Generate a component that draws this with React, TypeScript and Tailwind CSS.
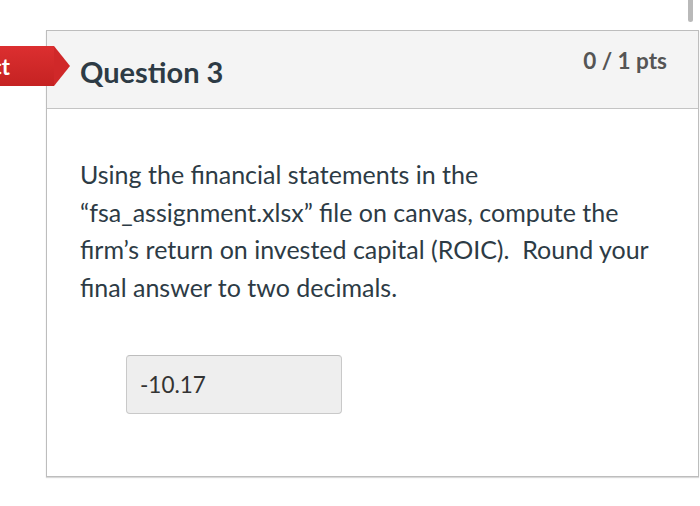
export default function App() {
  return (
    <div className="relative w-[700px] h-[506px] bg-white font-['Lato','Noto_Sans',sans-serif] overflow-hidden">
      {/* scrollbar thumb */}
      <div className="absolute left-[688px] top-0 w-[5px] h-[22px] rounded-b-full bg-[#b9b9b9]" />

      <div className="pt-[30px] pl-[46px]">
        <div className="w-[653px] h-[447px] border border-[#bdbdbd] shadow-[0_1px_1px_rgba(0,0,0,0.15)]">
          <div className="h-[78px] bg-[#f4f4f4] border-b border-[#c4c4c4] flex justify-between pl-[33px] pr-[31px]">
            <h2 className="pt-[23px] text-[29px] leading-[36px] font-bold text-[#2d3b45]">Question 3</h2>
            <div className="pt-[15px] text-[22.5px] leading-[30px] font-bold text-[#555]">0 / 1 pts</div>
          </div>

          <div className="pl-[33px] pt-[47px]">
            <p className="w-[578px] text-[25px] leading-[37.5px] text-[#2d3b45]">
              Using the financial statements in the “fsa_assignment.xlsx” file on canvas, compute the firm’s return on invested capital (ROIC).&nbsp; Round your final answer to two decimals.
            </p>
            <div className="mt-[49px] ml-[46px] w-[216px] h-[59px] rounded-[4px] border border-[#c9c9c9] border-t-[#bdbdbd] bg-[#eeeeee] flex items-center pl-[13px] text-[22.5px] text-[#333]">
              -10.17
            </div>
          </div>
        </div>
      </div>

      {/* incorrect marker */}
      <div className="absolute left-0 top-[46px] flex">
        <div className="w-[54px] h-[40px] overflow-hidden bg-gradient-to-b from-[#dc2f30] to-[#c52222] flex justify-end items-center">
          <span className="pr-[44px] text-white text-[22px] font-bold whitespace-nowrap">Incorrect</span>
        </div>
        <div className="w-0 h-0 border-y-[20px] border-y-transparent border-l-[16px] border-l-[#d02829]" />
      </div>
    </div>
  );
}
